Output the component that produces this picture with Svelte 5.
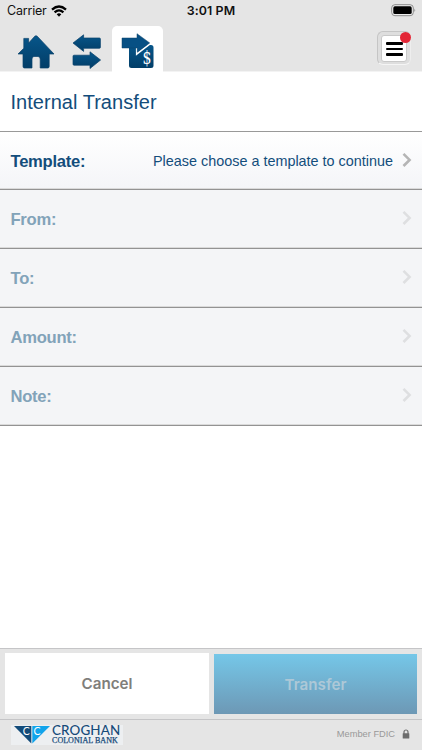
<script>
  const fields = [
    { label: 'Template:', value: 'Please choose a template to continue', active: true },
    { label: 'From:' },
    { label: 'To:' },
    { label: 'Amount:' },
    { label: 'Note:' }
  ];
</script>

<div class="screen">
  <header>
    <div class="status">
      <div class="carrier">
        <span>Carrier</span>
        <svg width="16" height="12" viewBox="0 0 16 12" fill="none" stroke="#000" stroke-width="2.3">
          <path d="M1 4.6Q8 -1.7 15 4.6" />
          <path d="M3.6 7.4Q8 3.3 12.4 7.4" />
          <path d="M5.7 9.3Q8 7.1 10.3 9.3L8 11.7Z" fill="#000" stroke="none" />
        </svg>
      </div>
      <div class="time">3:01 PM</div>
      <svg class="battery" width="26" height="13" viewBox="0 0 26 13">
        <rect x=".7" y=".7" width="21.6" height="11" rx="3.2" fill="#eee" stroke="#8b8b8b" />
        <rect x="2.3" y="2.3" width="18.4" height="7.8" rx="1.6" fill="#000" />
        <path d="M23.5 4.4Q25 6.2 23.5 8Z" fill="#777" />
      </svg>
    </div>
    <nav>
      <svg class="home" width="38" height="34" viewBox="0 0 38 34">
        <defs>
          <linearGradient id="navy" x1="0" y1="0" x2="0" y2="1">
            <stop offset="0" stop-color="#07568a" />
            <stop offset="1" stop-color="#023e68" />
          </linearGradient>
        </defs>
        <path fill="url(#navy)" stroke="#0a426b" stroke-width=".7" stroke-linejoin="round" d="M17.8 1.2Q19 .2 20.2 1.2L37 19H32.2V31.5Q32.2 33 30.7 33H23.2V24Q23.2 21.5 21 21.5H17Q15 21.5 15 24V33H7.5Q6 33 6 31.5V19H1L6.8 13.2V3.4H11.6V8.1Z" />
      </svg>
      <svg class="swap" width="30" height="36" viewBox="0 0 30 36">
        <g fill="url(#navy)" stroke="#0a426b" stroke-width=".7" stroke-linejoin="round">
          <path d="M1 9L11.6 .8V4H27.4Q28.4 4 28.4 5V13.3Q28.4 14.3 27.4 14.3H11.6V17.4Z" />
          <path d="M28.6 26L18 17.8V21.2H2Q1 21.2 1 22.2V30.2Q1 31.2 2 31.2H18V34.5Z" />
        </g>
      </svg>
      <div class="tab">
        <svg width="34" height="36" viewBox="0 0 34 36">
          <path d="M8 14V32.5Q8 35 10.5 35H30Q32.5 35 32.5 32.5V14.5Q32.5 12 30 12H20V14Z" fill="url(#navy)" />
          <path d="M15.8 15V20.8L29.6 10.2" fill="none" stroke="#fff" stroke-width="1.8" />
          <path d="M1 5H16V.7L28.7 9.9L16.3 19.3V15H1Z" fill="#075084" stroke="#0a426b" stroke-width=".5" />
          <text x="21.4" y="31.2" font-size="18" fill="#fff" font-family="DejaVu Serif, serif" textLength="9" lengthAdjust="spacingAndGlyphs">$</text>
        </svg>
      </div>
      <div class="menu">
        <div class="menuface"><i></i><i></i><i></i></div>
        <b class="dot"></b>
      </div>
    </nav>
  </header>

  <main>
    <h1><span>Internal Transfer</span></h1>
    {#each fields as field}
      <div class="row" class:active={field.active}>
        <strong>{field.label}</strong>
        {#if field.value}<span class="value">{field.value}</span>{/if}
        <svg class="chevron" width="10" height="16" viewBox="0 0 10 16" fill="none" stroke-width="2.6">
          <path d="M1.5 1.8L7.6 7.9L1.5 14" />
        </svg>
      </div>
    {/each}
  </main>

  <div class="actions">
    <button class="cancel">Cancel</button>
    <button class="transfer">Transfer</button>
  </div>

  <footer>
    <div class="logo">
      <svg width="37" height="20" viewBox="0 0 37 20">
        <path d="M0 1H17.3V18.5Z" fill="#134b79" />
        <path d="M18.3 1H36L18.3 18.5Z" fill="#11a4eb" />
        <g font-family="Lato, sans-serif" font-size="10.5" fill="#fff">
          <text x="8.7" y="10">C</text>
          <text x="19.4" y="10">C</text>
        </g>
      </svg>
      <div class="brand">
        <span class="name">CROGHAN</span>
        <span class="sub">COLONIAL BANK</span>
      </div>
    </div>
    <div class="fdic">
      <span>Member FDIC</span>
      <svg width="8" height="10" viewBox="0 0 8 10">
        <path d="M2 5V3A2 2 0 0 1 6 3V5" fill="none" stroke="#6d6d6d" stroke-width="1.2" />
        <rect x=".7" y="4.2" width="6.6" height="5.2" rx=".5" fill="#6d6d6d" />
      </svg>
    </div>
  </footer>
</div>

<style>
  :global(body) { margin: 0; background: #fff; }
  .screen {
    width: 422px;
    height: 750px;
    overflow: hidden;
    display: flex;
    flex-direction: column;
    background: #fff;
    font-family: "Liberation Sans", Arial, sans-serif;
  }
  svg { display: block; flex: none; }
  header { height: 71px; background: #e5e5e5; border-bottom: 1px solid #f3f3f3; }
  .status {
    height: 22px;
    display: grid;
    grid-template-columns: 1fr auto 1fr;
    font-family: Inter, sans-serif;
    font-size: 12.5px;
    line-height: 22px;
    color: #111;
  }
  .carrier { display: flex; align-items: center; gap: 4px; padding-left: 7px; letter-spacing: -.2px; }
  .carrier svg { margin-top: -1px; }
  .time { font-weight: 600; font-size: 12.4px; letter-spacing: .1px; line-height: 22px; }
  .battery { justify-self: end; margin: 4px 5px 0 0; }
  nav { height: 49px; display: flex; align-items: flex-start; }
  .home { margin: 13px 0 0 17px; }
  .swap { margin: 12px 0 0 17px; }
  .tab {
    width: 51px;
    height: 50px;
    margin: 4px 0 0 10px;
    background: #fff;
    border-radius: 5px 5px 0 0;
  }
  .tab svg { margin: 7px 0 0 9px; }
  .menu {
    position: relative;
    width: 34px;
    height: 34px;
    margin: 9px 11px 0 auto;
    box-sizing: border-box;
    padding: 3px;
    border: 1px solid #c5c5c5;
    border-right-color: #eee;
    border-bottom-color: #f5f5f5;
    border-radius: 6px;
    background: #dedede;
  }
  .menuface {
    height: 27px;
    box-sizing: border-box;
    border: 1px solid #c9c9c9;
    border-radius: 3px;
    background: #fff;
    display: flex;
    flex-direction: column;
    align-items: center;
    justify-content: center;
    gap: 3px;
    padding-top: 1px;
  }
  .menuface i { width: 17px; height: 2.5px; border-radius: 1px; background: #000; }
  .dot {
    position: absolute;
    right: -1px;
    top: 0;
    width: 11px;
    height: 11px;
    border-radius: 50%;
    background: #e32636;
  }
  h1 {
    margin: 0;
    height: 59px;
    padding: 0 0 0 10.5px;
    border-bottom: 1px solid #999;
    display: flex;
    align-items: center;
    font-size: 20px;
    letter-spacing: .03px;
    font-weight: 400;
    color: #134d7b;
    box-sizing: content-box;
  }
  h1 span { padding-top: 1px; }
  .row {
    height: 59px;
    box-sizing: border-box;
    border-bottom: 1px solid #939393;
    box-shadow: inset 0 -1px #dadada;
    background: #f4f5f7;
    display: flex;
    align-items: center;
    padding: 0 10px 0 10.5px;
    color: #82a3b9;
  }
  .row.active { height: 58px; background: linear-gradient(#fff, #f4f5f8); color: #134d7b; }
  .row strong { font-size: 16.6px; letter-spacing: -.27px; line-height: 20px; padding-top: 2px; }
  .value { margin-left: auto; margin-right: -1px; font-size: 14.4px; padding-top: 0; }
  .chevron { margin: -2px 0 0 auto; stroke: #dedfe1; }
  .active .chevron { margin-left: 10px; stroke: #b5b5b5; }
  .actions {
    margin-top: auto;
    height: 71px;
    box-sizing: border-box;
    border-top: 1px solid #c5c5c7;
    background: #e5e5e5;
    padding: 4px 5px 5px;
    display: flex;
    gap: 5px;
  }
  button {
    border: 0;
    border-radius: 0;
    padding: 0;
    height: 61px;
    font: 600 15.2px Inter, sans-serif;
  }
  .cancel { width: 204px; background: #fff; color: #807e7b; }
  .transfer {
    width: 203px;
    height: 60px;
    margin-top: 1px;
    background: linear-gradient(#75c7e8, #6d98b5);
    color: #adc8d7;
  }
  footer {
    height: 31px;
    box-sizing: border-box;
    border-top: 1px solid #c5c5c7;
    background: #e5e5e5;
    display: flex;
    justify-content: space-between;
    padding: 5px 12px 0 11px;
  }
  .logo { width: 109px; height: 20px; padding-left: 3px; background: #edeff1; display: flex; }
  .brand { display: flex; flex-direction: column; color: #174b79; white-space: nowrap; padding-left: 1px; }
  .name { font: 500 13.4px/11px Lato, sans-serif; letter-spacing: .15px; }
  .sub { font: 400 8px/10px "Liberation Serif", serif; letter-spacing: .04px; -webkit-text-stroke: .25px #174b79; }
  .fdic { display: flex; height: 18px; align-items: center; gap: 7px; font-size: 9.3px; color: #999; }
  .fdic span { letter-spacing: -.02px; }
</style>
